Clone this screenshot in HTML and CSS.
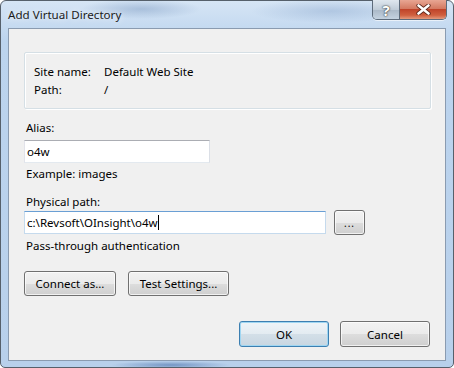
FILE: index.html
```html
<!DOCTYPE html>
<html lang="en">
<head>
    <meta charset="UTF-8">
    <title>Add Virtual Directory</title>
    <link rel="stylesheet" href="styles.css">
</head>
<body>
    <div class="window">
        <div class="titlebar">
            <span class="title">Add Virtual Directory</span>
            <div class="caption-buttons">
                <div class="cap-btn help">?</div>
                <div class="cap-btn close">
                    <svg width="15" height="11" viewBox="0 0 15 11">
                        <path d="M2.5 1.5 L12.5 9.5 M12.5 1.5 L2.5 9.5" stroke="#5a2418" stroke-width="4.2" stroke-linecap="round"/>
                        <path d="M2.5 1.5 L12.5 9.5 M12.5 1.5 L2.5 9.5" stroke="#ffffff" stroke-width="2.6" stroke-linecap="round"/>
                    </svg>
                </div>
            </div>
        </div>
        <div class="client">
            <div class="groupbox">
                <div class="info-row"><span class="info-label">Site name:</span><span>Default Web Site</span></div>
                <div class="info-row"><span class="info-label">Path:</span><span>/</span></div>
            </div>

            <label class="field-label alias-label" for="alias">Alias:</label>
            <input class="textbox alias" id="alias" type="text" value="o4w">
            <div class="hint">Example: images</div>

            <label class="field-label path-label" for="path">Physical path:</label>
            <div class="path-row">
                <div class="textbox path focused">c:\Revsoft\OInsight\o4w<span class="caret"></span></div>
                <button class="btn browse">...</button>
            </div>
            <div class="hint auth">Pass-through authentication</div>

            <div class="btn-row">
                <button class="btn connect">Connect as...</button>
                <button class="btn test">Test Settings...</button>
            </div>

            <div class="footer">
                <button class="btn dialog default">OK</button>
                <button class="btn dialog">Cancel</button>
            </div>
        </div>
    </div>
</body>
</html>
```

FILE: styles.css
```css
* {
    box-sizing: border-box;
    font-family: 'Noto Sans', 'Open Sans', sans-serif;
}
body {
    margin: 0;
    background-color: #ffffff;
}
.window {
    width: 454px;
    height: 368px;
    border: 1px solid #56606b;
    border-radius: 6px 6px 5px 5px;
    background:
        radial-gradient(ellipse 60px 4px at 170px 364px, rgba(70, 110, 170, 0.6), transparent),
        radial-gradient(ellipse 60px 10px at 140px 8px, rgba(120, 150, 190, 0.45), transparent),
        radial-gradient(ellipse 80px 12px at 330px 10px, rgba(130, 160, 200, 0.4), transparent),
        linear-gradient(#d6e5f5, #bcd4ee 40px, #b8d0eb);
    padding: 0 7px 6px 7px;
    display: flex;
    flex-direction: column;
    position: relative;
}
.titlebar {
    height: 27px;
    display: flex;
    align-items: flex-start;
}
.title {
    font-size: 11.6px;
    color: #1b1b1b;
    margin-top: 6px;
    margin-left: 0;
    text-shadow: 0 0 6px rgba(255, 255, 255, 0.9);
}
.caption-buttons {
    position: absolute;
    top: -1px;
    right: 6px;
    display: flex;
    border: 1px solid #5d6b7b;
    border-top: none;
    border-radius: 0 0 5px 5px;
    overflow: hidden;
    box-shadow: 0 1px 0 rgba(255, 255, 255, 0.6);
}
.cap-btn {
    height: 19px;
    display: flex;
    align-items: center;
    justify-content: center;
}
.help {
    width: 27px;
    background: linear-gradient(#dfe7ef, #c0ccd8 50%, #aab8c7 51%, #c4d2e0);
    border-right: 1px solid #5d6b7b;
    color: #ffffff;
    font-size: 15px;
    font-weight: bold;
    text-shadow: 0 0 1px #333, 0 0 2px #333;
}
.close {
    width: 46px;
    background: linear-gradient(#e8a693, #d47a62 45%, #c0442a 50%, #d0603f 80%, #e49a7e);
}
.client {
    flex: 1;
    border: 1px solid #8a9bb0;
    background-color: #f0f0f0;
    padding: 0 14px 0 15px;
    display: flex;
    flex-direction: column;
    font-size: 11.5px;
    color: #000000;
}
.groupbox {
    margin-top: 23px;
    height: 57px;
    border: 1px solid #d5dfe5;
    box-shadow: inset 1px 1px 0 #ffffff, 1px 1px 0 #ffffff;
    border-radius: 2px;
    padding: 10px 0 0 9px;
}
.info-row {
    display: flex;
    height: 18px;
    line-height: 18px;
}
.info-label {
    width: 70px;
}
.field-label {
    display: block;
    line-height: 16px;
    margin-left: 2px;
}
.alias-label {
    margin-top: 11px;
}
.textbox {
    height: 23px;
    border: 1px solid #abadb3;
    border-color: #abadb3 #dbdfe6 #e3e9ef #e2e3ea;
    background-color: #ffffff;
    font-size: 11.5px;
    font-family: inherit;
    padding: 0 2px;
    line-height: 21px;
    color: #000000;
    margin: 0;
}
.alias {
    width: 186px;
    margin-top: 4px;
    outline: none;
}
.hint {
    margin-top: 3px;
    line-height: 16px;
    margin-left: 2px;
}
.path-label {
    margin-top: 12px;
}
.path-row {
    display: flex;
    align-items: center;
    margin-top: 0;
}
.path {
    width: 302px;
}
.focused {
    border-color: #6a9fd4 #c5daed #c5daed #c5daed;
}
.caret {
    display: inline-block;
    width: 1px;
    height: 15px;
    background-color: #000000;
    vertical-align: -3px;
}
.btn {
    font-family: inherit;
    font-size: 11.5px;
    color: #000000;
    border: 1px solid #707070;
    border-radius: 3px;
    background: linear-gradient(#f2f2f2, #ebebeb 50%, #dddddd 51%, #cfcfcf);
    box-shadow: inset 0 0 0 1px rgba(255, 255, 255, 0.7);
    padding: 0;
    margin: 0;
}
.browse {
    width: 31px;
    height: 25px;
    margin-left: 8px;
    font-size: 10px;
    letter-spacing: 1px;
}
.auth {
    margin-top: 3px;
}
.btn-row {
    display: flex;
    gap: 12px;
    margin-top: 17px;
}
.connect {
    width: 92px;
    height: 25px;
}
.test {
    width: 101px;
    height: 25px;
}
.footer {
    display: flex;
    justify-content: flex-end;
    gap: 11px;
    margin-top: 25px;
    margin-right: 1px;
}
.dialog {
    width: 90px;
    height: 26px;
}
.default {
    border-color: #3c7fb1;
    box-shadow: inset 0 0 0 1px #9fd6f2;
    background: linear-gradient(#eef4f8, #e3ebf1 50%, #d3dfe8 51%, #c8d6e1);
}
```
